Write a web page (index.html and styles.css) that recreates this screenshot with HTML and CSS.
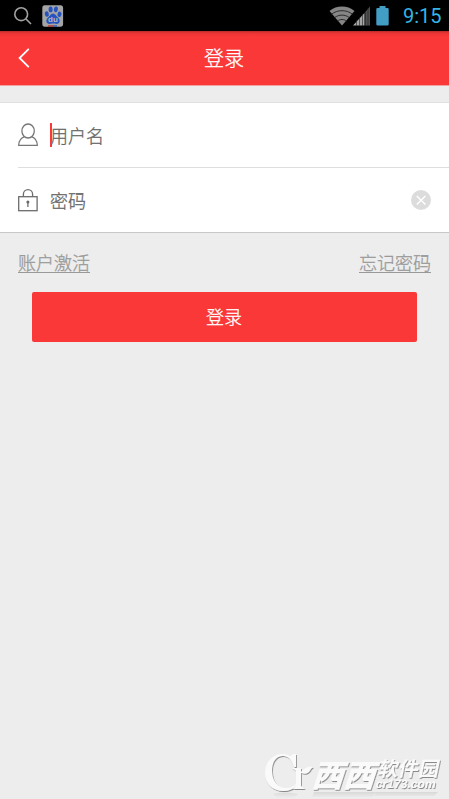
FILE: index.html
```html
<!DOCTYPE html>
<html lang="zh-CN">
<head>
<meta charset="utf-8">
<title>登录</title>
<link rel="stylesheet" href="styles.css">
</head>
<body>
<div class="screen">
  <div class="status">
    <svg class="status-search" width="20" height="20" viewBox="0 0 20 20" fill="none" stroke="#a2a2a2" stroke-width="1.6"><circle cx="8.2" cy="8.2" r="6.4"/><path d="M13 13l5 5"/></svg>
    <svg class="status-paw" width="22" height="22" viewBox="0 0 22 22"><rect x=".3" y=".3" width="20.800" height="21.4" rx="2.6" fill="#a4a5a7"/><g fill="#2653bd"><ellipse cx="4.8" cy="9" rx="2" ry="2.8" transform="rotate(-12 4.8 9)"/><ellipse cx="8.6" cy="4.4" rx="2" ry="2.9"/><ellipse cx="13.8" cy="4.4" rx="2" ry="2.9" transform="rotate(10 13.8 4.4)"/><ellipse cx="17.5" cy="9.3" rx="2" ry="2.7" transform="rotate(12 17.5 9.3)"/><path d="M11 8.5c2 0 3 2.300 5 4 3 3 1.500 6.500-1.500 6.400-1.500-.1-2-.4-3.500-.4s-2 .3-3.500.4C4.500 19 3 15.500 6 12.500c2-1.700 3-4 5-4z"/></g><text class="paw-text" x="11" y="17" text-anchor="middle">du</text><path d="M6 21h5" stroke="#b52c25" stroke-width="1.300"/><path d="M11 21h4" stroke="#2653bd" stroke-width="1.300"/></svg>
    <svg class="status-wifi" width="26" height="20" viewBox="0 0 26 20"><path d="M.5 5C7.500-.9 18.500-.9 25.500 5L13 19.500z" fill="#858585"/><path d="M2.500 8.200c6-4.700 15-4.700 21 0M5.500 11.600c4.500-3.300 10.500-3.300 15 0M8.500 15c2.800-2 6.200-2 9 0" fill="none" stroke="#222" stroke-width=".9"/></svg>
    <svg class="status-signal" width="18" height="20" viewBox="0 0 18 20"><path d="M0 19.500L11 7.500v12z" fill="#a6a6a6"/><path d="M11 19.500v-12L17 .5v19z" fill="#505050"/><path d="M3.500 14v6M6.500 11v9M9.500 8v12M12.500 5v15M15 2v18" stroke="#222" stroke-width=".6"/></svg>
    <svg class="status-battery" width="13" height="20" viewBox="0 0 13 20"><path d="M3.500 0h6v2h2q1.200 0 1.200 1.200v15q0 1.300-1.300 1.300H1.600q-1.300 0-1.300-1.300v-15Q.3 2 1.500 2h2z" fill="#439ec5"/></svg>
    <span class="clock">9:15</span>
  </div>
  <header class="bar">
    <svg class="back" width="12" height="20" viewBox="0 0 12 20" fill="none" stroke="#fff" stroke-width="1.800"><path d="M10.800.9L1.600 10l9.200 9.100"/></svg>
    <h1 class="title">登录</h1>
  </header>
  <main>
    <div class="form">
      <div class="row">
        <svg width="20" height="24" viewBox="0 0 20 24" fill="none" stroke="#777" stroke-width="1.300"><ellipse cx="10.100" cy="8" rx="6.200" ry="7"/><path d="M6.500 13.700C3 15 .8 18 .7 22.400h18.600C19.200 18 17 15 13.600 13.700"/></svg>
        <span class="caret"></span>
        <span class="label">用户名</span>
      </div>
      <div class="divider"></div>
      <div class="row">
        <svg width="20" height="24" viewBox="0 0 20 24" fill="none" stroke="#6c6c6c" stroke-width="1.300"><rect x=".7" y="8.700" width="18.400" height="14"/><path d="M5.400 8.500V6.300a4.600 4.600 0 0 1 9.200 0v2.200"/><circle cx="9.900" cy="14" r="1.500" fill="#666" stroke="none"/><path d="M9.900 14v5"/></svg>
        <span class="label">密码</span>
        <svg class="clear" width="20" height="20" viewBox="0 0 20 20"><circle cx="10" cy="10" r="10" fill="#dcdcdc"/><path d="M5.800 6l8.600 8.600m0-8.600l-8.600 8.600" stroke="#fff" stroke-width="1.400"/></svg>
      </div>
    </div>
    <div class="links"><a>账户激活</a><a>忘记密码</a></div>
    <div class="submit">登录</div>
  </main>
  <footer class="mark">
    <svg width="184" height="50" viewBox="0 0 184 50">
      <defs>
        <filter id="bevel" x="-10%" y="-20%" width="120%" height="150%"><feDropShadow dx=".8" dy="1" stdDeviation=".5" flood-color="#777" flood-opacity=".85"/></filter>
        <linearGradient id="fade" x1="0" y1="0" x2="0" y2="1"><stop offset="0" stop-color="#cecece"/><stop offset="1" stop-color="#ededed"/></linearGradient>
      </defs>
      <path d="M9 45q12-3 25 0l-4 4H13zM50 43h62l-4 5H48zM112 43h62l-4 4h-60z" fill="url(#fade)" opacity=".65"/>
      <g class="mark-ink" filter="url(#bevel)">
        <path fill-rule="evenodd" d="M18 5c5 0 7 2 9 2l2-2h3v13h-2C28 11 24 7 19 7 12 7 8 13 8 22c0 10 6 17 14 17 4 0 7-1 10-4l1 1c-3 4-8 6-14 6C8 42 1 34 1 24 1 13 9 5 18 5z"/>
        <path d="M28 19h9v4c3-3 6-6 12-5l-2 2c-2 4-5 6-10 4v13l4 3H29l3-3V22z"/>
        <text class="mark-big" transform="translate(47 38) skewX(-18)" textLength="63" lengthAdjust="spacingAndGlyphs">西西</text>
        <text class="mark-name" transform="translate(113 27) skewX(-12)" textLength="61" lengthAdjust="spacingAndGlyphs">软件园</text>
        <text class="mark-url" transform="translate(111 39) skewX(-12)" textLength="60" lengthAdjust="spacingAndGlyphs">cr173.com</text>
      </g>
    </svg>
  </footer>
</div>
</body>
</html>
```
FILE: styles.css
```css
* { box-sizing: border-box; }
body {
  margin: 0;
  background: #ededed;
  font-family: "Noto Sans CJK SC", sans-serif;
  font-weight: 300;
}
.screen {
  height: 799px;
  display: flex;
  flex-direction: column;
  overflow: hidden;
}
.status {
  flex: none;
  height: 31px;
  background: #000;
  display: flex;
  align-items: center;
  padding: 0 8px 0 13px;
}
.status svg { display: block; }
.status-paw { margin-left: 9px; }
.paw-text { font: bold 8px "Liberation Sans", sans-serif; fill: #b6b9c0; }
.status-wifi { margin-left: auto; }
.status-signal { margin-left: -2px; }
.status-battery { margin-left: 5px; }
.clock {
  width: 38px;
  margin-left: 14px;
  font: 20px Roboto, sans-serif;
  color: #33b5e5;
  white-space: nowrap;
  padding-top: 1px;
}
.bar {
  flex: none;
  height: 55px;
  display: grid;
  grid-template-columns: 60px 1fr 60px;
  align-items: center;
  background: linear-gradient(#b92a2a, #e93434 2px, #fa3838 5px);
  border-bottom: 1px solid #f3a0a0;
}
.back { margin-left: 18px; }
.title {
  margin: 0;
  padding-right: 1px;
  text-align: center;
  font-size: 20px;
  font-weight: 300;
  line-height: 28px;
  color: #fff;
}
.title, .label, .links, .submit { -webkit-text-stroke: 0.3px currentColor; }
.form {
  margin-top: 16px;
  border-top: 1px solid #e0e0e0;
  border-bottom: 1px solid #c8c8c8;
  background: #fff;
}
.row {
  height: 64px;
  display: flex;
  align-items: center;
  padding: 0 18px;
}
.caret {
  width: 2px;
  height: 24px;
  margin-left: 12px;
  margin-right: -2px;
  background: #fa3838;
}
.label {
  font-size: 18px;
  line-height: 26px;
  color: #666;
}
svg + .label { margin-left: 12px; }
.clear { margin-left: auto; }
.divider {
  height: 1px;
  margin-left: 18px;
  background: #dedede;
}
.links {
  display: flex;
  justify-content: space-between;
  padding: 16px 18px 0;
  font-size: 18px;
  line-height: 26px;
  color: #999;
}
.links a { text-decoration: underline; text-decoration-thickness: 1px; text-underline-offset: 2px; }
.submit {
  height: 50px;
  margin: 17px 32px 0;
  padding-right: 1px;
  border-radius: 2px;
  background: #fa3838;
  color: #fff;
  font-size: 18px;
  line-height: 49px;
  text-align: center;
}
.mark {
  margin-top: auto;
  display: flex;
  justify-content: flex-end;
  padding-right: 1px;
}
.mark svg { display: block; }
.mark-ink { fill: #fafafa; }
.mark-big { font: 900 31px "Noto Sans CJK SC", sans-serif; }
.mark-name { font: bold 20px "Noto Sans CJK SC", sans-serif; }
.mark-url { font: bold 12px "Liberation Sans", sans-serif; }
```
